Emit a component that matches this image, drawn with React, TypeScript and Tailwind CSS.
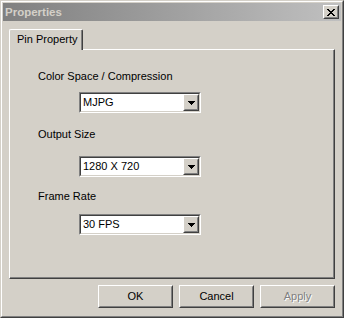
import React from "react";

const face = "bg-[#d4d0c8]";

// classic raised 3D frame (two nested 1px borders)
const Raised: React.FC<{ className?: string; innerClassName?: string; children?: React.ReactNode }> = ({
  className = "",
  innerClassName = "",
  children,
}) => (
  <div
    className={`border border-t-white border-l-white border-r-[#404040] border-b-[#404040] ${className}`}
  >
    <div
      className={`h-full w-full border border-t-[#d4d0c8] border-l-[#d4d0c8] border-r-[#808080] border-b-[#808080] ${face} ${innerClassName}`}
    >
      {children}
    </div>
  </div>
);

const CloseGlyph = () => (
  <svg width="8" height="7" viewBox="0 0 8 7" shapeRendering="crispEdges">
    {[
      [0, 0, 2], [6, 0, 2],
      [1, 1, 2], [5, 1, 2],
      [2, 2, 4],
      [3, 3, 2],
      [2, 4, 4],
      [1, 5, 2], [5, 5, 2],
      [0, 6, 2], [6, 6, 2],
    ].map(([x, y, w], i) => (
      <rect key={i} x={x} y={y} width={w} height={1} fill="#000" />
    ))}
  </svg>
);

const DownArrow = () => (
  <svg width="7" height="4" viewBox="0 0 7 4" shapeRendering="crispEdges">
    <rect x="0" y="0" width="7" height="1" fill="#000" />
    <rect x="1" y="1" width="5" height="1" fill="#000" />
    <rect x="2" y="2" width="3" height="1" fill="#000" />
    <rect x="3" y="3" width="1" height="1" fill="#000" />
  </svg>
);

const Combo: React.FC<{ value: string; className?: string }> = ({ value, className = "" }) => (
  <div
    className={`ml-[41px] w-[122px] h-[21px] border border-t-[#808080] border-l-[#808080] border-r-white border-b-white ${className}`}
  >
    <div className="flex h-full border border-t-[#404040] border-l-[#404040] border-r-[#d4d0c8] border-b-[#d4d0c8] bg-white">
      <div className="flex-1 flex items-center pl-[2px] text-black">{value}</div>
      <Raised className="w-[16px] h-full" innerClassName="flex items-center justify-center">
        <DownArrow />
      </Raised>
    </div>
  </div>
);

const Btn: React.FC<{ label: string; disabled?: boolean }> = ({ label, disabled }) => (
  <Raised className="w-[75px] h-[23px]" innerClassName="flex items-center justify-center">
    {disabled ? (
      <span className="text-[#808080] [text-shadow:1px_1px_0_#ffffff]">{label}</span>
    ) : (
      <span className="text-black">{label}</span>
    )}
  </Raised>
);

export default function App() {
  return (
    <div className="w-[344px] h-[318px] font-['Liberation_Sans',Arial,sans-serif] text-[11px] leading-[13px] text-black">
      <div className="h-full border border-t-[#d4d0c8] border-l-[#d4d0c8] border-r-[#404040] border-b-[#404040]">
        <div className={`h-full flex flex-col p-px border border-t-white border-l-white border-r-[#808080] border-b-[#808080] ${face}`}>
          {/* Title bar (inactive) */}
          <div className="h-[18px] flex items-center bg-gradient-to-r from-[#808080] to-[#c0c0c0] pl-[2px] pr-[2px]">
            <span className="font-bold text-[#d4d0c8] text-[11.5px]">Properties</span>
            <Raised className="ml-auto w-[16px] h-[14px]" innerClassName="flex items-center justify-center">
              <CloseGlyph />
            </Raised>
          </div>

          {/* Body */}
          <div className="flex-1 flex flex-col pl-[6px] pr-[6px] pt-[8px]">
            {/* Tab strip */}
            <div className="flex">
              <div className="relative z-10 -mb-px w-[74px] h-[21px] rounded-tl-[2px] rounded-tr-[2px] border-t border-l border-r border-t-white border-l-white border-r-[#404040] bg-[#d4d0c8]">
                <div className="h-full border-r border-r-[#808080] pl-[7px] pt-[3px]">Pin Property</div>
              </div>
            </div>

            {/* Tab page */}
            <div className="h-[230px] border border-t-white border-l-white border-r-[#404040] border-b-[#404040]">
              <div className="h-full flex flex-col border-r border-b border-r-[#808080] border-b-[#808080] pl-[28px]">
                <div className="mt-[20px]">Color Space / Compression</div>
                <Combo value="MJPG" className="mt-[9px]" />
                <div className="mt-[15px]">Output Size</div>
                <Combo value="1280 X 720" className="mt-[15px]" />
                <div className="mt-[13px]">Frame Rate</div>
                <Combo value="30 FPS" className="mt-[11px]" />
              </div>
            </div>

            {/* Buttons */}
            <div className="mt-[6px] flex justify-end gap-[6px]">
              <Btn label="OK" />
              <Btn label="Cancel" />
              <Btn label="Apply" disabled />
            </div>
          </div>
        </div>
      </div>
    </div>
  );
}
